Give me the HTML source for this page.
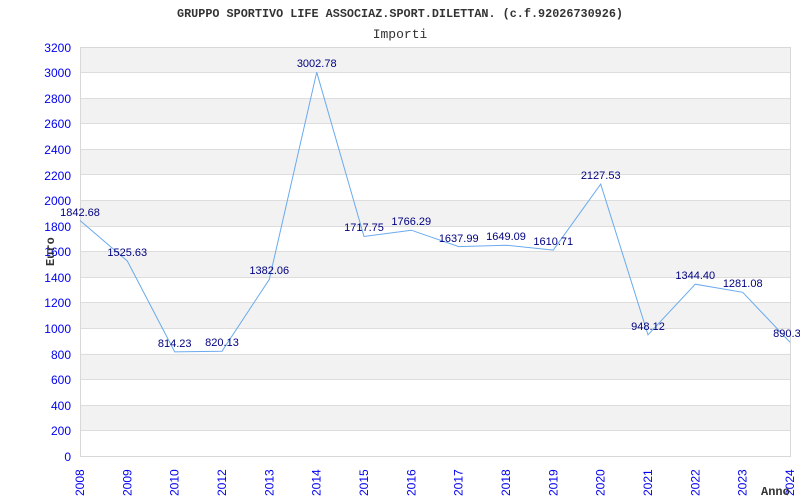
<!DOCTYPE html>
<html><head><meta charset="utf-8"><style>
body{margin:0;background:#fff}
svg{display:block}
.yl{font:12px "Liberation Sans",sans-serif;fill:#0000ee;text-anchor:end}
.xl{font:12px "Liberation Sans",sans-serif;fill:#0000ee}
.dl{font:11px "Liberation Sans",sans-serif;fill:#000080;text-anchor:middle}
</style></head><body>
<svg width="800" height="500" xmlns="http://www.w3.org/2000/svg">
<text x="400" y="17" text-anchor="middle" style="font:bold 11.8px 'Liberation Mono',monospace;fill:#333">GRUPPO SPORTIVO LIFE ASSOCIAZ.SPORT.DILETTAN. (c.f.92026730926)</text>
<text x="400" y="38" text-anchor="middle" style="font:13px 'Liberation Mono',monospace;fill:#333">Importi</text>
<g fill="#f2f2f2">
<rect x="80" y="47" width="710" height="25.6"/>
<rect x="80" y="98.1" width="710" height="25.6"/>
<rect x="80" y="149.3" width="710" height="25.6"/>
<rect x="80" y="200.4" width="710" height="25.6"/>
<rect x="80" y="251.5" width="710" height="25.6"/>
<rect x="80" y="302.6" width="710" height="25.6"/>
<rect x="80" y="353.8" width="710" height="25.6"/>
<rect x="80" y="404.9" width="710" height="25.6"/>
</g>
<g stroke="#dddddd" stroke-width="1">
<line x1="80" x2="790" y1="72.5" y2="72.5"/><line x1="80" x2="790" y1="98.5" y2="98.5"/>
<line x1="80" x2="790" y1="123.5" y2="123.5"/><line x1="80" x2="790" y1="149.5" y2="149.5"/>
<line x1="80" x2="790" y1="174.5" y2="174.5"/><line x1="80" x2="790" y1="200.5" y2="200.5"/>
<line x1="80" x2="790" y1="226.5" y2="226.5"/><line x1="80" x2="790" y1="251.5" y2="251.5"/>
<line x1="80" x2="790" y1="277.5" y2="277.5"/><line x1="80" x2="790" y1="302.5" y2="302.5"/>
<line x1="80" x2="790" y1="328.5" y2="328.5"/><line x1="80" x2="790" y1="354.5" y2="354.5"/>
<line x1="80" x2="790" y1="379.5" y2="379.5"/><line x1="80" x2="790" y1="405.5" y2="405.5"/>
<line x1="80" x2="790" y1="430.5" y2="430.5"/>
</g>
<rect x="80.5" y="47.5" width="710" height="409" fill="none" stroke="#d8d8d8"/>
<g class="yl">
<text x="71" y="52">3200</text><text x="71" y="77">3000</text><text x="71" y="103">2800</text>
<text x="71" y="128">2600</text><text x="71" y="154">2400</text><text x="71" y="180">2200</text>
<text x="71" y="205">2000</text><text x="71" y="231">1800</text><text x="71" y="256">1600</text>
<text x="71" y="282">1400</text><text x="71" y="307">1200</text><text x="71" y="333">1000</text>
<text x="71" y="359">800</text><text x="71" y="384">600</text><text x="71" y="410">400</text>
<text x="71" y="435">200</text><text x="71" y="461">0</text>
</g>
<text transform="translate(54,266) rotate(-90)" style="font:bold 12px 'Liberation Mono',monospace;fill:#333">Euro</text>
<g class="xl">
<text transform="translate(84,496) rotate(-90)">2008</text>
<text transform="translate(131.3,496) rotate(-90)">2009</text>
<text transform="translate(178.7,496) rotate(-90)">2010</text>
<text transform="translate(226,496) rotate(-90)">2012</text>
<text transform="translate(273.3,496) rotate(-90)">2013</text>
<text transform="translate(320.7,496) rotate(-90)">2014</text>
<text transform="translate(368,496) rotate(-90)">2015</text>
<text transform="translate(415.3,496) rotate(-90)">2016</text>
<text transform="translate(462.7,496) rotate(-90)">2017</text>
<text transform="translate(510,496) rotate(-90)">2018</text>
<text transform="translate(557.3,496) rotate(-90)">2019</text>
<text transform="translate(604.7,496) rotate(-90)">2020</text>
<text transform="translate(652,496) rotate(-90)">2021</text>
<text transform="translate(699.3,496) rotate(-90)">2022</text>
<text transform="translate(746.7,496) rotate(-90)">2023</text>
<text transform="translate(794,496) rotate(-90)">2024</text>
</g>
<text x="761" y="495" style="font:bold 12px 'Liberation Mono',monospace;fill:#333">Anno</text>
<polyline fill="none" stroke="#6aaaee" stroke-width="1" points="80,220.5 127.3,261 174.7,351.9 222,351.2 269.3,279.4 316.7,72.2 364,236.5 411.3,230.2 458.7,246.6 506,245.2 553.3,250.1 600.7,184.1 648,334.8 695.3,284.2 742.7,292.3 790,342.2"/>
<g class="dl">
<text x="80" y="216">1842.68</text>
<text x="127.3" y="256">1525.63</text>
<text x="174.7" y="347">814.23</text>
<text x="222" y="346">820.13</text>
<text x="269.3" y="274">1382.06</text>
<text x="316.7" y="67">3002.78</text>
<text x="364" y="231">1717.75</text>
<text x="411.3" y="225">1766.29</text>
<text x="458.7" y="242">1637.99</text>
<text x="506" y="240">1649.09</text>
<text x="553.3" y="245">1610.71</text>
<text x="600.7" y="179">2127.53</text>
<text x="648" y="330">948.12</text>
<text x="695.3" y="279">1344.40</text>
<text x="742.7" y="287">1281.08</text>
<text x="790" y="337">890.30</text>
</g>
</svg>
</body></html>
